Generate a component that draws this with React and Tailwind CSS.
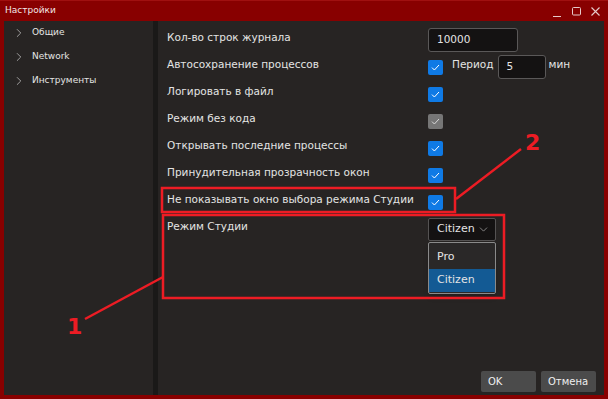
import { ChevronRight, ChevronDown } from 'lucide-react';

const Check = ({ gray }) => (
  <div
    className={`w-[15px] h-[15px] rounded-[2px] flex items-center justify-center ${
      gray ? 'bg-[#767676]' : 'bg-[#0f7ae5]'
    }`}
  >
    <svg width="9" height="7" viewBox="0 0 9 7" fill="none">
      <path d="M1 3.6 L3.4 6 L8 1" stroke={gray ? '#d8d8d8' : '#ffffff'} strokeWidth="1" />
    </svg>
  </div>
);

const Row = ({ label, children, h = 'h-[27px]' }) => (
  <div className={`flex items-start ${h}`}>
    <div className="w-[261px] pt-[6px] leading-[14px]">{label}</div>
    <div className="flex items-start">{children}</div>
  </div>
);

export default function App() {
  const nav = ['Общие', 'Network', 'Инструменты'];

  return (
    <div className="w-[608px] h-[399px] bg-[#880000] border-t border-[#a01010] relative flex flex-col font-['DejaVu_Sans',sans-serif] text-[10.5px] text-[#e4e4e4] overflow-hidden">
      {/* title bar */}
      <div className="h-[20px] flex items-center justify-between pl-[5px] pr-[8px] text-[#f2e6e6]">
        <span className="text-[9px]">Настройки</span>
        <div className="flex items-center gap-[10px] text-[#e6caca]">
          <svg width="9" height="12" viewBox="0 0 9 12">
            <path d="M0 11.5 H8" stroke="currentColor" strokeWidth="1" />
          </svg>
          <svg width="9" height="9" viewBox="0 0 9 9">
            <rect x="0.5" y="0.5" width="8" height="7.5" fill="none" stroke="currentColor" strokeWidth="1" rx="1" />
          </svg>
          <svg width="9" height="9" viewBox="0 0 9 9">
            <path d="M0.5 0.5 L8.5 8.5 M8.5 0.5 L0.5 8.5" stroke="currentColor" strokeWidth="1.1" />
          </svg>
        </div>
      </div>

      <div className="flex flex-1 mx-[4px] mb-[4px]">
        {/* sidebar */}
        <div className="w-[149px] bg-[#272423] flex flex-col text-[9px]">
          {nav.map(n => (
            <div key={n} className="h-[24px] flex items-center">
              <ChevronRight className="w-[14px] h-[14px] ml-[8px] text-[#cfcfcf]" strokeWidth={1.2} />
              <span className="ml-[6px] text-[#e4e4e4]">{n}</span>
            </div>
          ))}
        </div>
        <div className="w-[5px] bg-[#1a1918]" />

        {/* main */}
        <div className="flex-1 bg-[#272423] flex flex-col pl-[9px] pt-[3px] pr-[8px] pb-[3px]">
          <Row label="Кол-во строк журнала">
            <div className="mt-[4px] w-[90px] h-[24px] bg-[#141212] border border-[#5a5858] rounded-[3px] flex items-center pl-[8px]">
              10000
            </div>
          </Row>
          <Row label="Автосохранение процессов">
            <div className="mt-[9px]">
              <Check />
            </div>
            <span className="ml-[9px] pt-[6px] leading-[14px]">Период</span>
            <div className="ml-[4px] mt-[4px] w-[48px] h-[24px] bg-[#141212] border border-[#5a5858] rounded-[3px] flex items-center pl-[8px]">
              5
            </div>
            <span className="ml-[3px] pt-[6px] leading-[14px]">мин</span>
          </Row>
          <Row label="Логировать в файл">
            <div className="mt-[9px]"><Check /></div>
          </Row>
          <Row label="Режим без кода">
            <div className="mt-[9px]"><Check gray /></div>
          </Row>
          <Row label="Открывать последние процессы">
            <div className="mt-[9px]"><Check /></div>
          </Row>
          <Row label="Принудительная прозрачность окон">
            <div className="mt-[9px]"><Check /></div>
          </Row>
          <Row label="Не показывать окно выбора режима Студии">
            <div className="mt-[9px]"><Check /></div>
          </Row>
          <Row label="Режим Студии">
            <div className="mt-[5px] relative">
              <div className="w-[68px] h-[23px] bg-[#141212] border border-[#555353] rounded-[2px] flex items-center justify-between pl-[8px] pr-[5px]">
                <span className="text-[11px]">Citizen</span>
                <ChevronDown className="w-[13px] h-[13px] text-[#bdbdbd]" strokeWidth={1.2} />
              </div>
              <div className="absolute left-0 top-[24px] w-[68px] h-[52px] bg-[#2a2828] border border-[#8a8a8a] rounded-[2px] flex flex-col pt-[2px] shadow-md">
                <div className="h-[24px] flex items-center pl-[8px] text-[11px]">Pro</div>
                <div className="h-[23px] flex items-center pl-[8px] bg-[#135a94] text-[11px]">Citizen</div>
              </div>
            </div>
          </Row>

          <div className="flex-1" />
          <div className="flex justify-end gap-[5px] text-[10px]">
            <button className="w-[55px] h-[21px] bg-[#4b4b4b] rounded-[2px] text-left pl-[7px] text-[#f0f0f0]">OK</button>
            <button className="w-[55px] h-[21px] bg-[#4b4b4b] rounded-[2px] text-left pl-[7px] text-[#f0f0f0]">Отмена</button>
          </div>
        </div>
      </div>

      {/* annotations */}
      <svg className="absolute inset-0 pointer-events-none" width="608" height="399" viewBox="0 0 608 399">
        <g stroke="#ed1c24" strokeWidth="2.5" fill="none">
          <rect x="162" y="187" width="293" height="24" />
          <rect x="163" y="214" width="341" height="83" />
          <path d="M456 198 L521 148" />
          <path d="M163 276 L85 318" />
        </g>
        <text x="525" y="148.5" fill="#ed1c24" fontSize="22" fontWeight="bold" fontFamily="DejaVu Sans, sans-serif">2</text>
        <text x="67" y="333" fill="#ed1c24" fontSize="22" fontWeight="bold" fontFamily="DejaVu Sans, sans-serif">1</text>
      </svg>
    </div>
  );
}
